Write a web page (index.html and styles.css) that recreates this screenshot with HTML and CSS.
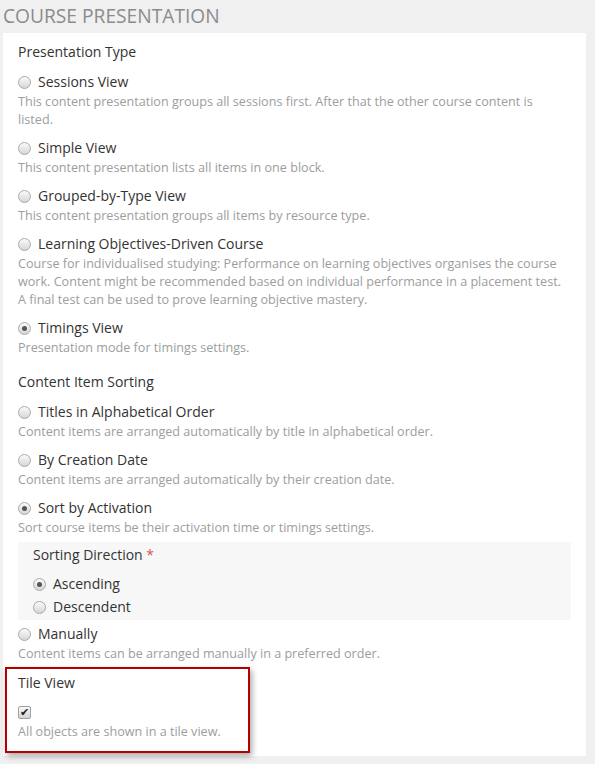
FILE: index.html
```html
<!DOCTYPE html>
<html>
<head>
<meta charset="utf-8">
<link rel="stylesheet" href="styles.css">
</head>
<body>
<h1 class="title">COURSE PRESENTATION</h1>
<div class="panel">
  <div class="section-label">Presentation Type</div>
  <div class="option">
    <div class="opt-row"><span class="radio"></span><span class="opt-label">Sessions View</span></div>
    <div class="help">This content presentation groups all sessions first. After that the other course content is listed.</div>
  </div>
  <div class="option">
    <div class="opt-row"><span class="radio"></span><span class="opt-label">Simple View</span></div>
    <div class="help">This content presentation lists all items in one block.</div>
  </div>
  <div class="option">
    <div class="opt-row"><span class="radio"></span><span class="opt-label">Grouped-by-Type View</span></div>
    <div class="help">This content presentation groups all items by resource type.</div>
  </div>
  <div class="option">
    <div class="opt-row"><span class="radio"></span><span class="opt-label">Learning Objectives-Driven Course</span></div>
    <div class="help">Course for individualised studying: Performance on learning objectives organises the course work. Content might be recommended based on individual performance in a placement test. A final test can be used to prove learning objective mastery.</div>
  </div>
  <div class="option">
    <div class="opt-row"><span class="radio checked"></span><span class="opt-label">Timings View</span></div>
    <div class="help">Presentation mode for timings settings.</div>
  </div>

  <div class="section-label second">Content Item Sorting</div>
  <div class="option">
    <div class="opt-row"><span class="radio"></span><span class="opt-label">Titles in Alphabetical Order</span></div>
    <div class="help">Content items are arranged automatically by title in alphabetical order.</div>
  </div>
  <div class="option">
    <div class="opt-row"><span class="radio"></span><span class="opt-label">By Creation Date</span></div>
    <div class="help">Content items are arranged automatically by their creation date.</div>
  </div>
  <div class="option">
    <div class="opt-row"><span class="radio checked"></span><span class="opt-label">Sort by Activation</span></div>
    <div class="help">Sort course items be their activation time or timings settings.</div>
  </div>
  <div class="subbox">
    <div class="sub-label">Sorting Direction <span class="req">*</span></div>
    <div class="opt-row first"><span class="radio checked"></span><span class="opt-label">Ascending</span></div>
    <div class="opt-row tight"><span class="radio"></span><span class="opt-label">Descendent</span></div>
  </div>
  <div class="option manual">
    <div class="opt-row"><span class="radio"></span><span class="opt-label">Manually</span></div>
    <div class="help">Content items can be arranged manually in a preferred order.</div>
  </div>

  <div class="tile">
    <div class="tile-label">Tile View</div>
    <div class="check-row"><span class="checkbox">&#10004;</span></div>
    <div class="help">All objects are shown in a tile view.</div>
  </div>
</div>
</body>
</html>
```
FILE: styles.css
```css
html, body {
  margin: 0;
  padding: 0;
  background: #f0f0f0;
}
body {
  font-family: "Open Sans", "Liberation Sans", sans-serif;
  color: #333;
  width: 595px;
  height: 764px;
  overflow: hidden;
}
.title {
  margin: 0;
  padding: 3px 0 0 3px;
  height: 30px;
  font-size: 19.2px;
  line-height: 26px;
  font-weight: 400;
  color: #8c8c8c;
}
.panel {
  background: #fff;
  margin-left: 3px;
  width: 583px;
  box-sizing: border-box;
  padding: 9px 20px 3px 15px;
}
.section-label {
  font-size: 14px;
  line-height: 20px;
  color: #333;
}
.section-label.second {
  margin-top: 15px;
}
.option {
  margin-top: 9px;
}
.section-label + .option {
  margin-top: 10px;
}
.opt-row {
  display: flex;
  align-items: center;
  height: 20px;
}
.opt-label {
  font-size: 14px;
  line-height: 20px;
  color: #333;
}
.radio {
  width: 11px;
  height: 11px;
  border-radius: 50%;
  border: 1px solid #a9a9a9;
  background: linear-gradient(#fafafa, #d6d6d6);
  margin: 0 7px 0 0;
  position: relative;
  flex: none;
}
.radio.checked::after {
  content: "";
  position: absolute;
  left: 3px;
  top: 3px;
  width: 5px;
  height: 5px;
  border-radius: 50%;
  background: #555;
}
.help {
  font-size: 12.6px;
  line-height: 18px;
  color: #9d9d9d;
  margin-top: 1px;
}
.subbox {
  background: #f7f7f7;
  margin: 5px 0 0 0;
  width: 553px;
  box-sizing: border-box;
  padding: 3px 15px 3px 15px;
}
.sub-label {
  font-size: 14px;
  line-height: 20px;
  color: #333;
}
.req {
  color: #d9534f;
}
.opt-row.first {
  margin-top: 9px;
}
.opt-row.tight {
  margin-top: 3px;
}
.option.manual {
  margin-top: 4px;
}
.tile {
  position: relative;
  margin-top: 4px;
  padding: 6px 0 12px 0;
}
.tile::after {
  content: "";
  position: absolute;
  left: -13px;
  top: 0;
  width: 241px;
  height: 82px;
  border: 2px solid #b40000;
  box-shadow: 2px 3px 6px rgba(0, 0, 0, 0.35);
}
.tile-label {
  font-size: 14px;
  line-height: 20px;
  color: #333;
}
.check-row {
  height: 20px;
  margin-top: 9px;
  display: flex;
  align-items: center;
}
.checkbox {
  width: 11px;
  height: 11px;
  border: 1px solid #a0a0a0;
  border-radius: 2px;
  background: linear-gradient(#f8f8f8, #d4d4d4);
  font-size: 11px;
  font-weight: bold;
  line-height: 11px;
  text-align: center;
  color: #222;
  font-family: "DejaVu Sans", sans-serif;
}
.tile .help {
  margin-top: 1px;
}
```
